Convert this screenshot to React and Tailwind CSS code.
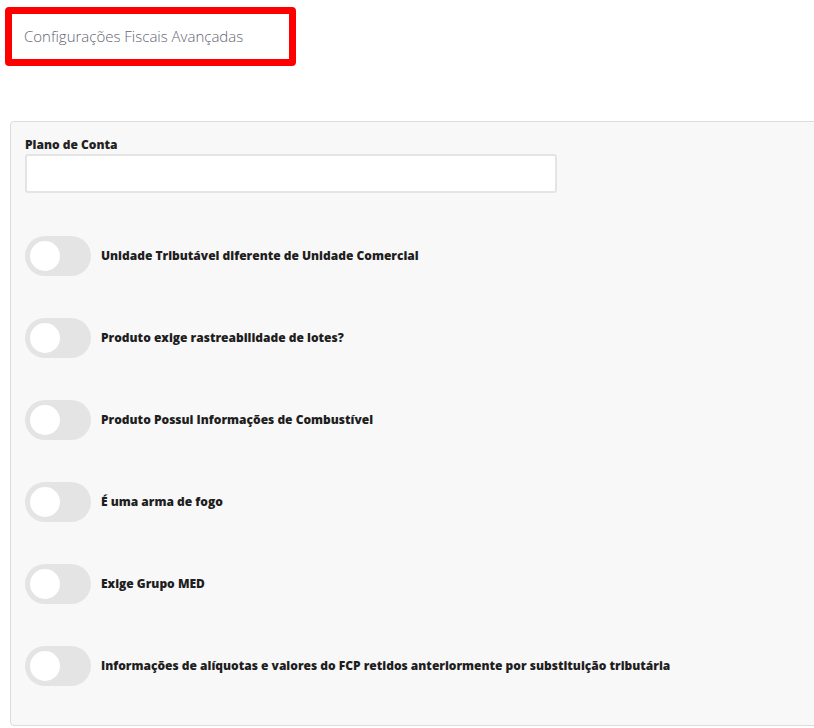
const options = [
  'Unidade Tributável diferente de Unidade Comercial',
  'Produto exige rastreabilidade de lotes?',
  'Produto Possui Informações de Combustível',
  'É uma arma de fogo',
  'Exige Grupo MED',
  'Informações de alíquotas e valores do FCP retidos anteriormente por substituição tributária',
];

function Toggle() {
  return (
    <div className="w-[66px] h-[40px] rounded-full bg-[#e4e4e4] flex items-center px-[5px] shrink-0">
      <div className="w-[30px] h-[30px] rounded-full bg-white" />
    </div>
  );
}

export default function App() {
  return (
    <div
      className="w-[814px] h-[728px] overflow-hidden bg-white"
      style={{ fontFamily: '"Open Sans", sans-serif' }}
    >
      <div className="pt-[7px] pl-[5px]">
        <div className="w-[291px] h-[59px] border-[7px] border-[#ff0000] rounded-[4px] flex items-center pl-[12px]">
          <span className="text-[15px] font-light text-[#5f6472]">Configurações Fiscais Avançadas</span>
        </div>
      </div>

      <div className="mt-[55px] ml-[10px] w-[830px] h-[605px] bg-[#f8f8f8] border border-[#dcdcdc] rounded-[4px] pt-[14px] pl-[14px]">
        <label className="block text-[12px] font-extrabold text-[#222] leading-[18px]">Plano de Conta</label>
        <input
          type="text"
          className="block w-[532px] h-[39px] bg-white border-2 border-[#e4e4e4] rounded-[3px] outline-none"
        />
        <div className="mt-[43px] flex flex-col gap-[42px]">
          {options.map((text) => (
            <div key={text} className="flex items-center gap-[10px]">
              <Toggle />
              <span className="text-[12px] font-extrabold text-[#1e1e1e]">{text}</span>
            </div>
          ))}
        </div>
      </div>
    </div>
  );
}
